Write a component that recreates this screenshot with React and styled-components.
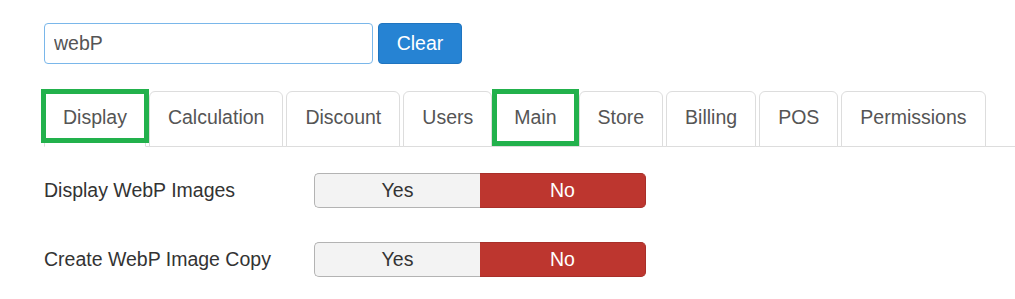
import React, { useState } from "react";
import styled, { createGlobalStyle } from "styled-components";

const Global = createGlobalStyle`
  html, body { margin: 0; padding: 0; background: #fff; }
  body { font-family: "Liberation Sans", Arial, sans-serif; color: #333; }
  * { box-sizing: border-box; }
`;

const Page = styled.div`
  padding: 23px 0 0 44px;
  width: 1015px;
  overflow: hidden;
`;

const SearchRow = styled.div`
  display: flex;
  gap: 5px;
  align-items: stretch;
`;

const SearchInput = styled.input`
  width: 329px;
  height: 41px;
  border: 1px solid #7ab7ea;
  border-radius: 4px;
  padding: 0 9px;
  font: 19.5px "Liberation Sans", Arial, sans-serif;
  color: #555;
  outline: none;
`;

const ClearButton = styled.button`
  width: 84px;
  height: 41px;
  background: #2683d3;
  border: 1px solid #1f74bf;
  border-radius: 4px;
  color: #fff;
  font: 19.5px "Liberation Sans", Arial, sans-serif;
  padding: 0;
`;

const Tabs = styled.ul`
  display: flex;
  list-style: none;
  margin: 27px 0 0;
  padding: 0;
  border-bottom: 1px solid #ddd;
`;

const Tab = styled.li`
  position: relative;
  margin: 0 3px -1px 0;
  height: 56px;
  padding: 0 18px 3px;
  display: flex;
  align-items: center;
  font-size: 19.5px;
  color: #555;
  background: #fff;
  border: 1px solid #ddd;
  border-bottom-color: ${(p) => (p.$active ? "transparent" : "#ddd")};
  border-radius: 6px 6px 0 0;
  cursor: pointer;
  white-space: nowrap;
  ${(p) =>
    p.$marked &&
    `
    &::after {
      content: "";
      position: absolute;
      left: -4px;
      right: -4px;
      top: -3px;
      bottom: ${p.$active ? "3px" : "0px"};
      border: 5px solid #22b14c;
      pointer-events: none;
    }
  `}
`;

const Form = styled.div`
  padding-top: 26px;
  display: flex;
  flex-direction: column;
  gap: 34px;
`;

const Row = styled.div`
  display: flex;
  align-items: center;
`;

const Label = styled.div`
  width: 270px;
  font-size: 19.5px;
  color: #333;
`;

const Toggle = styled.div`
  display: flex;
  width: 332px;
  height: 35px;
`;

const Segment = styled.button`
  flex: 1;
  font: 19.5px "Liberation Sans", Arial, sans-serif;
  padding: 0;
  border: 1px solid ${(p) => (p.$on ? (p.$danger ? "#a82f29" : "#a5a5a5") : "#b3b3b3")};
  background: ${(p) => (p.$on ? (p.$danger ? "#bd362f" : "#5aa65a") : "#f3f3f3")};
  color: ${(p) => (p.$on ? "#fff" : "#333")};
  border-radius: ${(p) => (p.$first ? "5px 0 0 5px" : "0 5px 5px 0")};
  ${(p) => (p.$first ? "border-right: none;" : "border-left: none;")}
  cursor: pointer;
`;

const tabs = [
  { name: "Display", active: true, marked: true },
  { name: "Calculation" },
  { name: "Discount" },
  { name: "Users" },
  { name: "Main", marked: true },
  { name: "Store" },
  { name: "Billing" },
  { name: "POS" },
  { name: "Permissions" },
];

function YesNo() {
  const [val, setVal] = useState(false);
  return (
    <Toggle>
      <Segment $first $on={val} onClick={() => setVal(true)}>
        Yes
      </Segment>
      <Segment $on={!val} $danger onClick={() => setVal(false)}>
        No
      </Segment>
    </Toggle>
  );
}

export default function App() {
  const [q, setQ] = useState("webP");
  return (
    <>
      <Global />
      <Page>
        <SearchRow>
          <SearchInput value={q} onChange={(e) => setQ(e.target.value)} />
          <ClearButton onClick={() => setQ("")}>Clear</ClearButton>
        </SearchRow>
        <Tabs>
          {tabs.map((t) => (
            <Tab key={t.name} $active={t.active} $marked={t.marked}>
              {t.name}
            </Tab>
          ))}
        </Tabs>
        <Form>
          <Row>
            <Label>Display WebP Images</Label>
            <YesNo />
          </Row>
          <Row>
            <Label>Create WebP Image Copy</Label>
            <YesNo />
          </Row>
        </Form>
      </Page>
    </>
  );
}
